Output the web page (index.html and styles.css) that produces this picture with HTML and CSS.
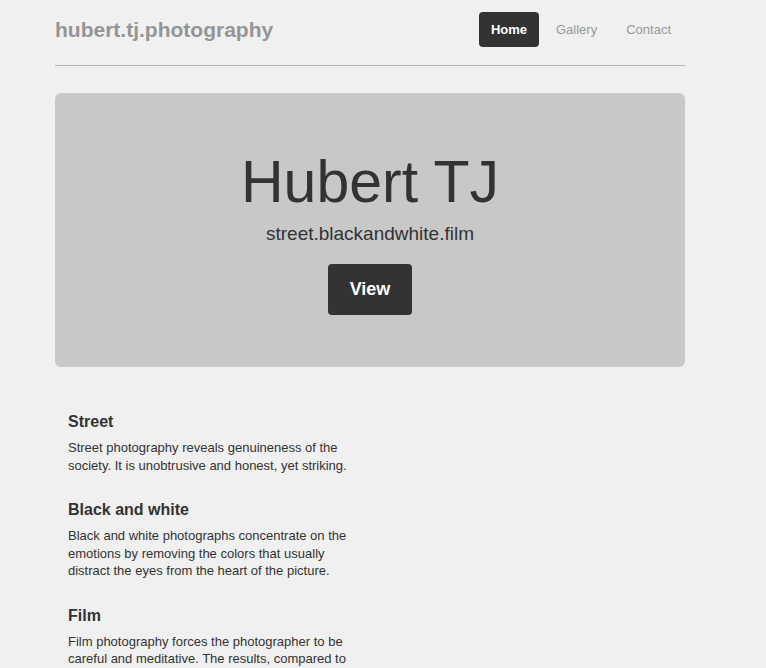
FILE: index.html
```html
<!DOCTYPE html>
<html>
<head>
<meta charset="utf-8">
<title>hubert.tj.photography</title>
<link rel="stylesheet" href="styles.css">
</head>
<body>
<div class="container">
  <header class="header">
    <h3 class="brand">hubert.tj.photography</h3>
    <nav class="nav">
      <a class="pill active" href="#">Home</a>
      <a class="pill" href="#">Gallery</a>
      <a class="pill" href="#">Contact</a>
    </nav>
  </header>
  <section class="jumbotron">
    <h1 class="title">Hubert TJ</h1>
    <p class="lead">street.blackandwhite.film</p>
    <a class="btn" href="#">View</a>
  </section>
  <section class="topics">
    <div class="topic">
      <h4>Street</h4>
      <p>Street photography reveals genuineness of the society. It is unobtrusive and honest, yet striking.</p>
    </div>
    <div class="topic">
      <h4>Black and white</h4>
      <p>Black and white photographs concentrate on the emotions by removing the colors that usually distract the eyes from the heart of the picture.</p>
    </div>
    <div class="topic">
      <h4>Film</h4>
      <p>Film photography forces the photographer to be careful and meditative. The results, compared to digital, are more organic and timeless.</p>
    </div>
  </section>
</div>
</body>
</html>
```
FILE: styles.css
```css
* { box-sizing: border-box; }
html, body { margin: 0; padding: 0; }
body {
  background: #f0f0f0;
  color: #333;
  font-family: "Liberation Sans", Arial, sans-serif;
  font-size: 13px;
}
.container {
  width: 630px;
  margin-left: 55px;
}
.header {
  display: flex;
  justify-content: space-between;
  align-items: center;
  height: 66px;
  padding-bottom: 6px;
  border-bottom: 1px solid #b5b5b5;
}
.brand {
  margin: 0;
  font-size: 21px;
  font-weight: bold;
  color: #959595;
}
.nav {
  display: flex;
  gap: 5px;
  margin-right: 2px;
}
.pill {
  display: block;
  height: 35px;
  line-height: 35px;
  padding: 0 12px;
  border-radius: 4px;
  font-size: 13px;
  color: #999;
  text-decoration: none;
}
.pill.active {
  background: #333;
  color: #fff;
  font-weight: bold;
}
.jumbotron {
  margin-top: 27px;
  height: 274px;
  background: #c8c8c8;
  border-radius: 6px;
  display: flex;
  flex-direction: column;
  align-items: center;
  padding-top: 50px;
}
.title {
  margin: 0;
  font-size: 59px;
  font-weight: normal;
  line-height: 78px;
  color: #333;
}
.lead {
  margin: 0;
  font-size: 19px;
  line-height: 26px;
  color: #333;
}
.btn {
  margin-top: 17px;
  display: block;
  height: 51px;
  line-height: 51px;
  padding: 0 22px;
  background: #333;
  color: #fff;
  border-radius: 4px;
  font-size: 18px;
  font-weight: bold;
  text-decoration: none;
}
.topics {
  width: 315px;
  padding: 0 13px;
  margin-top: 44px;
}
.topic { margin-bottom: 25px; }
.topic h4 {
  margin: 0 0 6px;
  font-size: 16px;
  font-weight: bold;
  line-height: 22px;
}
.topic p {
  margin: 0;
  line-height: 17.5px;
}
```
